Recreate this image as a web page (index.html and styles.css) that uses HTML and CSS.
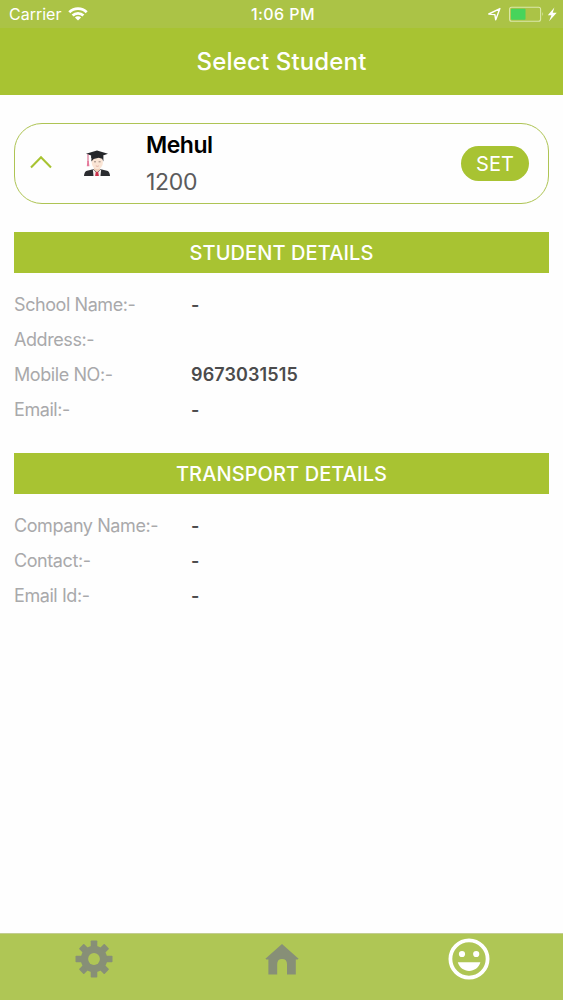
FILE: index.html
```html
<!DOCTYPE html>
<html lang="en">

<head>
    <meta charset="UTF-8">
    <meta name="viewport" content="width=device-width, initial-scale=1.0">
    <title>Select Student</title>
    <link rel="stylesheet" href="styles.css">
</head>

<body>

    <div class="status">
        <div class="carrier">
            <span>Carrier</span>
            <svg width="20" height="14" viewBox="0 0 20 14" fill="none" stroke="#fff" stroke-width="2.8">
                <path d="M1.3 5.2a12.4 12.4 0 0 1 17.4 0" />
                <path d="M4.6 8.5a7.7 7.7 0 0 1 10.8 0" />
                <path d="M10 13.6L6.9 10.5a4.4 4.4 0 0 1 6.2 0z" fill="#fff" stroke="none" />
            </svg>
        </div>
        <span class="time">1:06 PM</span>
        <div class="battery">
            <svg width="70" height="18" viewBox="0 0 70 18">
                <path d="M1.8 9L12.9 3.6L8.7 14.8L7.9 9.6z" fill="none" stroke="#fff" stroke-width="1.4" stroke-linejoin="round" />
                <rect x="22.6" y="2.2" width="31" height="14" rx="2" fill="none" stroke="#dce8ac" stroke-width="1.1" />
                <rect x="24" y="3.7" width="14.5" height="11" rx=".8" fill="#47d45b" />
                <path d="M55.3 6.8q1.7 2.2 0 4.5z" fill="#dce8ac" />
                <path d="M67.4 2.4L60.8 10.2H64.4L62.1 16.2L69.7 7.7H65.7z" fill="#fff" />
            </svg>
        </div>
    </div>

    <header>
        <h1>Select Student</h1>
    </header>

    <main>
        <div class="student">
            <svg class="arrow" width="22" height="14" viewBox="0 0 22 14" fill="none" stroke="#a8c332" stroke-width="2.1">
                <path d="M1 12.4L11 2.2L21 12.4" />
            </svg>
            <svg class="avatar" width="26" height="27" viewBox="0 0 26 27">
                <path d="M0 26q.3-4.5 3-5.2l6.2-1.6h7.6l6.2 1.6q2.7 .7 3 5.2z" fill="#2b2c30" />
                <path d="M8.8 19.2L13 23l4.2-3.8L16.5 26h-7z" fill="#f3f1f0" />
                <path d="M12 20.5h2l.9 5.500h-3.8z" fill="#c9314a" />
                <path d="M10 15h6v5l-3 2.2l-3-2.2z" fill="#efcfb9" />
                <ellipse cx="13.3" cy="12.4" rx="5.6" ry="6.9" fill="#fae5d5" />
                <path d="M7.4 11.500V5.500h12V11.500l-1.300-2.800l-3.400-.9l-5 1.300z" fill="#292a2e" />
                <path d="M10 11.8h2M14.6 11.8h2" stroke="#75635c" stroke-width=".7" />
                <path d="M11.8 15.9q1.6 .9 3 0" fill="none" stroke="#d79d91" stroke-width=".7" />
                <path d="M2 3.800L13 .6L24 3.800L19 5.600V8q-6-2-11.800 0V5.600z" fill="#24262a" />
                <path d="M4 4.3v8" stroke="#d1577c" stroke-width="1" />
                <path d="M3.3 11h1.5l.6 5.300H2.800z" fill="#e5799b" />
            </svg>
            <div class="info">
                <div class="name">Mehul</div>
                <div class="number">1200</div>
            </div>
            <button class="set">SET</button>
        </div>

        <section>
            <h2>STUDENT DETAILS</h2>
            <div class="row"><span class="label">School Name:-</span><span class="value">-</span></div>
            <div class="row"><span class="label">Address:-</span></div>
            <div class="row"><span class="label">Mobile NO:-</span><span class="value">9673031515</span></div>
            <div class="row"><span class="label">Email:-</span><span class="value">-</span></div>
        </section>

        <section>
            <h2>TRANSPORT DETAILS</h2>
            <div class="row"><span class="label">Company Name:-</span><span class="value">-</span></div>
            <div class="row"><span class="label">Contact:-</span><span class="value">-</span></div>
            <div class="row"><span class="label">Email Id:-</span><span class="value">-</span></div>
        </section>
    </main>

    <nav>
        <a class="tab">
            <svg width="42" height="42" viewBox="-21 -21 42 42" fill="#878f77">
                <rect x="-3.3" y="-18.5" width="6.6" height="37" rx=".8" />
                <rect x="-18.5" y="-3.3" width="37" height="6.6" rx=".8" />
                <rect x="-3.5" y="-18" width="7" height="36" rx=".8" transform="rotate(45)" />
                <rect x="-3.5" y="-18" width="7" height="36" rx=".8" transform="rotate(-45)" />
                <circle r="13.2" />
                <circle r="5.9" fill="#afc655" />
            </svg>
        </a>
        <a class="tab">
            <svg width="42" height="42" viewBox="0 0 42 42" fill="#878f77">
                <path d="M21 6L37.6 20.7L36.6 21.6H34.8V36.4H26V26.3Q26 21 21 21Q16.2 21 16.2 26.3V36.4H7.4V21.6H5.4L4.400 20.7z" />
            </svg>
        </a>
        <a class="tab">
            <svg width="42" height="42" viewBox="0 0 42 42" fill="#fff">
                <circle cx="21" cy="21" r="18.6" fill="none" stroke="#fff" stroke-width="3.8" />
                <circle cx="14" cy="16" r="3.100" />
                <circle cx="28.2" cy="16" r="3.100" />
                <path d="M9.800 24.300H32.400C30.700 29.700 26.200 33 21.100 33S11.500 29.700 9.800 24.300z" />
            </svg>
        </a>
    </nav>

</body>

</html>
```
FILE: styles.css
```css
:root {
    --green: #a8c332;
    --label: #a9a9ab;
    --dark: #4b4b4c;
}

* {
    margin: 0px;
    padding: 0px;
    box-sizing: border-box;
}

body {
    height: 1000px;
    display: flex;
    flex-direction: column;
    background-color: #fefefe;
    font-family: Inter, "Liberation Sans", sans-serif;
    overflow: hidden;
}

.status {
    height: 28px;
    padding: 0 6px 0 9px;
    display: grid;
    grid-template-columns: 1fr auto 1fr;
    align-items: center;
    background-color: #abc346;
    color: #fff;
    font-size: 16px;
}

.carrier {
    display: flex;
    align-items: center;
    gap: 7px;
}

.time {
    font-weight: 500;
    letter-spacing: 0.4px;
}

.battery {
    display: flex;
    justify-content: flex-end;
}

header {
    height: 67px;
    display: flex;
    align-items: center;
    justify-content: center;
    background-color: var(--green);
    color: #fff;
}

h1 {
    font-size: 24px;
    font-weight: 500;
    letter-spacing: 0.15px;
}

main {
    flex: 1;
    padding: 28px 14px 0;
}

.student {
    height: 81px;
    padding: 0 19px 0 15px;
    display: flex;
    align-items: center;
    border: 1px solid #aec454;
    border-radius: 28px;
}

.arrow {
    margin-bottom: 3px;
}

.avatar {
    margin-left: 32px;
}

.info {
    flex: 1;
    margin-left: 36px;
    font-size: 23px;
    line-height: 37px;
}

.name {
    color: #000;
    font-weight: 600;
    letter-spacing: -0.5px;
}

.number {
    color: #5b5b5c;
    letter-spacing: -0.3px;
}

.set {
    width: 68px;
    height: 35px;
    border: none;
    border-radius: 18px;
    background-color: var(--green);
    color: #fff;
    font-family: inherit;
    font-size: 20px;
}

section {
    margin-top: 28px;
}

section + section {
    margin-top: 26px;
}

h2 {
    height: 41px;
    margin-bottom: 14px;
    background-color: var(--green);
    color: #fff;
    font-size: 20px;
    font-weight: 500;
    letter-spacing: 0.1px;
    line-height: 42px;
    text-align: center;
}

.row {
    height: 35px;
    display: flex;
    align-items: center;
    font-size: 18px;
}

.label {
    width: 177px;
    color: var(--label);
    letter-spacing: -0.42px;
}

.value {
    color: var(--dark);
    font-weight: 600;
    letter-spacing: 0.12px;
}

nav {
    height: 67px;
    display: flex;
    background-color: #afc655;
    border-top: 1px solid #c3cd91;
}

.tab {
    flex: 1;
    padding-top: 4px;
    display: flex;
    justify-content: center;
}
```
